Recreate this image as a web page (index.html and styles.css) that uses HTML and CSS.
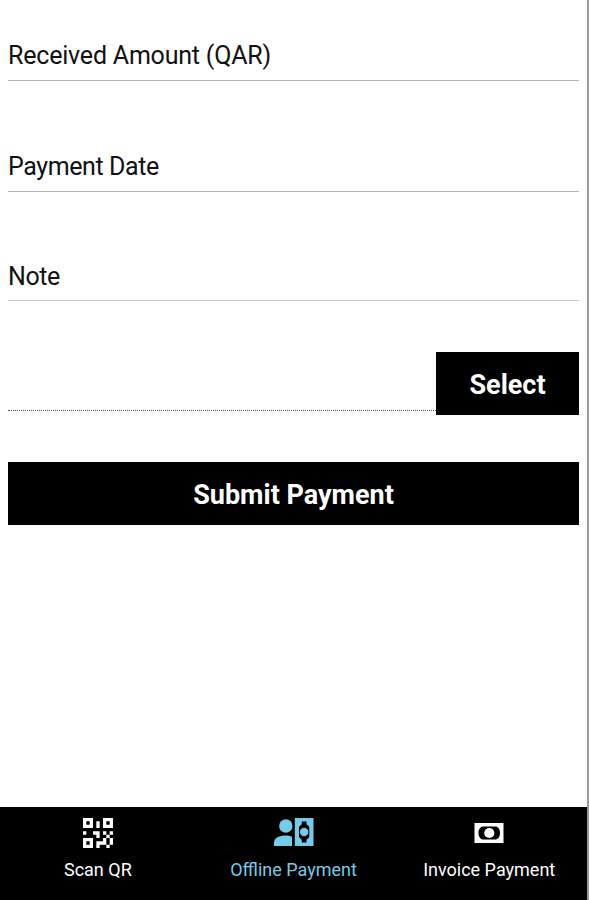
FILE: index.html
```html
<!DOCTYPE html>
<html lang="en">
<head>
  <meta charset="UTF-8">
  <meta name="viewport" content="width=device-width, initial-scale=1">
  <title>Offline Payment</title>
  <link rel="stylesheet" href="styles.css">
</head>
<body>
  <div class="screen">
    <!-- Payment form -->
    <form class="payment-form">
      <div class="field field-amount">Received Amount (QAR)</div>
      <div class="field field-date">Payment Date</div>
      <div class="field field-note">Note</div>
      <div class="file-row">
        <div class="file-name"></div>
        <button type="button" class="btn select-btn">Select</button>
      </div>
      <button type="button" class="btn submit-btn">Submit Payment</button>
    </form>

    <!-- Bottom tabs -->
    <nav class="tabs">
      <a class="tab">
        <svg class="tab-icon" width="30" height="30" viewBox="3 3 18 18" fill="currentColor" fill-rule="evenodd">
          <path d="M3 11h2v2H3zM11 5h2v4h-2zM9 11h4v4h-2v-2H9zM15 11h2v2h2v-2h2v2h-2v2h2v4h-2v2h-2v-2h-4v2h-2v-4h4v-2h2v-2h-2zM19 19v-4h-2v4zM15 3h6v6h-6zM17 5v2h2V5zM3 3h6v6H3zM5 5v2h2V5zM3 15h6v6H3zM5 17v2h2v-2z"/>
        </svg>
        <span>Scan QR</span>
      </a>
      <a class="tab active">
        <svg class="tab-icon" width="40" height="30" viewBox="0 0 40 30" fill="currentColor" fill-rule="evenodd">
          <circle cx="11.8" cy="8" r="6.7"/>
          <path d="M0 28v-3.500C0 20 5.500 17.500 11.500 17.500c2.500 0 4.700.4 6.500 1.200V28z"/>
          <path d="M20.800 0H39.500V28H20.800zM27.800 3.500V5.500C27.800 7.500 25 7.500 25 9.500V18.500C25 20.500 27.800 20.500 27.800 22.500V24.500H32.500V22.500C32.500 20.500 35.300 20.500 35.300 18.500V9.500C35.300 7.500 32.500 7.500 32.500 5.500V3.500z"/>
          <circle cx="30.100" cy="14" r="4.200"/>
        </svg>
        <span>Offline Payment</span>
      </a>
      <a class="tab">
        <svg class="tab-icon" width="30" height="30" viewBox="0 0 30 30" fill="currentColor" fill-rule="evenodd">
          <path d="M.5 5H29.500V25H.5zM9.500 8.500C6.500 8.500 4.500 11 4.500 15S6.500 21.500 9.500 21.500H21C24 21.500 26 19 26 15S24 8.500 21 8.500z"/>
          <circle cx="15.300" cy="15" r="5.100"/>
        </svg>
        <span>Invoice Payment</span>
      </a>
    </nav>
  </div>
</body>
</html>
```
FILE: styles.css
```css
* {
  box-sizing: border-box;
}
body {
  margin: 0;
  background: #fefefe;
  font-family: Roboto, sans-serif;
  color: #111;
}
.screen {
  display: flex;
  flex-direction: column;
  height: 900px;
  border-right: 2px solid #999;
}
.payment-form {
  flex: 1;
  display: flex;
  flex-direction: column;
  padding: 30px 8px 0;
}
.field {
  height: 51px;
  border-bottom: 1px solid #b4b4b4;
  font-size: 25px;
  letter-spacing: -0.4px;
  line-height: 52px;
  white-space: nowrap;
}
.field-amount {
  letter-spacing: -0.2px;
}
.field-date {
  margin-top: 60px;
}
.field-note {
  margin-top: 59px;
  height: 50px;
  border-color: #c8c8c8;
}
.file-row {
  display: flex;
  margin-top: 51px;
}
.file-name {
  flex: 1;
  height: 59px;
  border-bottom: 1px dotted #555;
}
.btn {
  height: 63px;
  padding: 3px 0 0;
  border: none;
  background: #000;
  color: #fff;
  font-family: inherit;
  font-size: 27px;
  font-weight: bold;
}
.select-btn {
  width: 143px;
}
.submit-btn {
  margin-top: 47px;
}
.tabs {
  display: flex;
  height: 93px;
  background: #000;
}
.tab {
  flex: 1;
  display: flex;
  flex-direction: column;
  align-items: center;
  padding-top: 11px;
  color: #fff;
  font-size: 18px;
  line-height: 22px;
  white-space: nowrap;
}
.tab-icon {
  margin-bottom: 11px;
}
.active {
  color: #76cbe9;
}
```
